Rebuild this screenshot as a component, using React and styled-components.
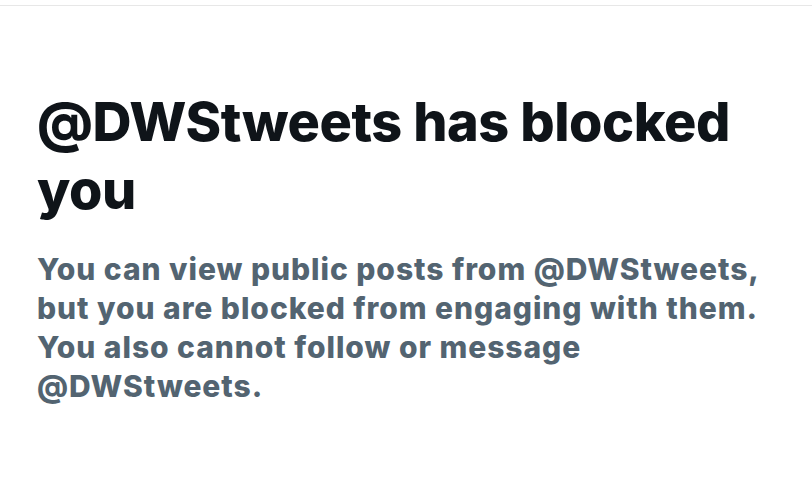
import React from 'react';
import styled, { createGlobalStyle } from 'styled-components';

const GlobalStyle = createGlobalStyle`
  body {
    margin: 0;
    background: #fff;
    font-family: Inter, "Noto Sans", sans-serif;
  }
`;

const Page = styled.div`
  width: 812px;
  height: 486px;
  overflow: hidden;
`;

const TopBar = styled.div`
  height: 5px;
  border-bottom: 1px solid #e7e7e7;
`;

const Content = styled.div`
  padding: 82px 40px 0 37px;
`;

const Title = styled.h1`
  margin: 0;
  font-size: 54px;
  line-height: 68px;
  font-weight: 800;
  color: #0f1419;
  letter-spacing: -0.45px;
  max-width: 720px;
`;

const Subtitle = styled.p`
  margin: 26px 0 0;
  font-size: 30px;
  line-height: 39px;
  font-weight: 800;
  color: #536471;
  letter-spacing: 0.95px;
  max-width: 770px;
`;

function App() {
  return (
    <Page>
      <GlobalStyle />
      <TopBar />
      <Content>
        <Title>@DWStweets has blocked you</Title>
        <Subtitle>
          You can view public posts from @DWStweets, but you are blocked from
          engaging with them. You also cannot follow or message @DWStweets.
        </Subtitle>
      </Content>
    </Page>
  );
}

export default App;
